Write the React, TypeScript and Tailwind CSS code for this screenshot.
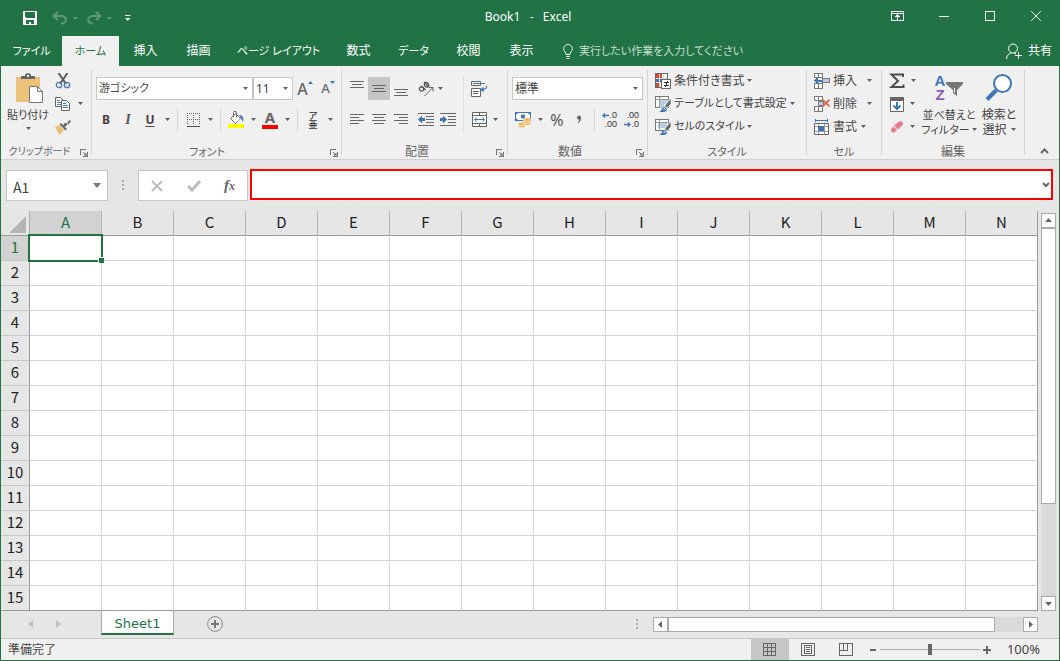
import React from 'react';

const columns = 'ABCDEFGHIJKLMN'.split('');
const rows = Array.from({ length: 15 }, (_, i) => i + 1);

const tabs = [
  { label: 'ファイル', cls: 'w-[61px] text-[11px] text-white' },
  { label: 'ホーム', cls: 'w-[57px] bg-[#f0f0f0] text-[11px] text-[#217346]' },
  { label: '挿入', cls: 'w-[53px] text-white' },
  { label: '描画', cls: 'w-[53px] text-white' },
  { label: 'ページ レイアウト', cls: 'w-[107px] text-[11px] text-white' },
  { label: '数式', cls: 'w-[53px] text-white' },
  { label: 'データ', cls: 'w-[57px] text-[11px] text-white' },
  { label: '校閲', cls: 'w-[53px] text-white' },
  { label: '表示', cls: 'w-[53px] text-white' },
];

type Kids = { children?: React.ReactNode };

function Svg({ w = 16, h = 16, crisp = false, children }: Kids & { w?: number; h?: number; crisp?: boolean }) {
  return (
    <svg
      width={w}
      height={h}
      viewBox={`0 0 ${w} ${h}`}
      fill="none"
      stroke="#666"
      shapeRendering={crisp ? 'crispEdges' : 'auto'}
      className="shrink-0"
      aria-hidden="true"
    >
      {children}
    </svg>
  );
}

function Arrow({ color = '#5f5f5f' }: { color?: string }) {
  return (
    <svg width="5" height="3" viewBox="0 0 5 3" className="shrink-0" aria-hidden="true">
      <path d="M0 0h5L2.500 3z" fill={color} />
    </svg>
  );
}

function Tool({ label, cls = '', children }: Kids & { label: string; cls?: string }) {
  return (
    <button type="button" aria-label={label} className={`flex h-[23px] w-[22px] items-center justify-center ${cls}`}>
      {children}
    </button>
  );
}

function Drop({ label, cls = 'w-3' }: { label: string; cls?: string }) {
  return (
    <button type="button" aria-label={label} className={`flex h-[23px] items-center justify-center ${cls}`}>
      <Arrow />
    </button>
  );
}

const Sep = () => <span className="mx-1 h-[22px] w-px bg-[#d5d5d5]" />;

function Combo({ label, value, cls, size = 'text-xs' }: { label: string; value: string; cls: string; size?: string }) {
  return (
    <span className={`relative flex ${cls}`}>
      <select
        aria-label={label}
        defaultValue={value}
        className={`h-[23px] w-full appearance-none border border-[#c6c6c6] bg-white pl-0.5 text-[#444] outline-none ${size}`}
      >
        <option>{value}</option>
      </select>
      <span className="pointer-events-none absolute inset-y-0 right-[5px] flex items-center">
        <Arrow />
      </span>
    </span>
  );
}

function Group({
  title,
  cls,
  launcher,
  size = 'text-xs',
  children,
}: Kids & { title: string; cls: string; launcher?: boolean; size?: string }) {
  return (
    <section aria-label={title} className={`flex shrink-0 pt-1 ${cls}`}>
      <div className="flex flex-1 flex-col">
        <div className="flex h-[74px]">{children}</div>
        <div className="flex h-[15px] items-center">
          <span className={`flex-1 text-center leading-[15px] whitespace-nowrap text-[#666] ${size}`}>{title}</span>
          {launcher && (
            <button type="button" aria-label={`${title}の設定`} className="mt-0.5 mr-[3px] -ml-2">
              <Svg w={8} h={8} crisp>
                <path d="M.5 6V.5H6M3 3l3 3M7.500 3v4.500H3" stroke="#777" />
                <path d="M4 4h3v3H4z" fill="#777" stroke="none" opacity=".6" />
              </Svg>
            </button>
          )}
        </div>
      </div>
      <span className="h-[85px] w-px bg-[#d5d5d5]" />
    </section>
  );
}

function MenuRow({
  label,
  arrowCls,
  icon,
  size = 'text-xs',
}: {
  label: string;
  arrowCls: string;
  icon: React.ReactNode;
  size?: string;
}) {
  return (
    <button type="button" className={`flex h-[23px] items-center whitespace-nowrap text-[#444] ${size}`}>
      {icon}
      <span className="ml-[3px]">{label}</span>
      <span className={arrowCls}>
        <Arrow />
      </span>
    </button>
  );
}

function Lines({ rows: list }: { rows: [number, number, number][] }) {
  return (
    <Svg crisp>
      {list.map(([x, y, w]) => (
        <path key={y} d={`M${x} ${y}.5h${w}`} />
      ))}
    </Svg>
  );
}

function Grip() {
  return (
    <svg width="2" height="10" viewBox="0 0 2 10" fill="#aaa" aria-hidden="true">
      <path d="M0 0h2v2H0zM0 4h2v2H0zM0 8h2v2H0z" />
    </svg>
  );
}

function TitleBar() {
  return (
    <header className="grid h-9 grid-cols-3 items-center">
      <div className="flex items-center pl-[22px]">
        <button type="button" aria-label="上書き保存">
          <Svg w={14} h={14} crisp>
            <path d="M0 0h14v14H0z" fill="#fff" stroke="none" />
            <path d="M2 1h10v5l-1 1H3L2 6zM3 9h8v4H8v-2H6v2H3z" fill="#217346" stroke="none" />
          </Svg>
        </button>
        <button type="button" aria-label="元に戻す" className="ml-[15px]">
          <Svg w={16} h={14}>
            <path d="M6 1L1.500 5 6 9M2 5h7c7 0 6 7.500 0 7.500" stroke="#5c9a78" strokeWidth="2" />
          </Svg>
        </button>
        <span className="ml-[5px]"><Arrow color="#5c9a78" /></span>
        <button type="button" aria-label="やり直し" className="ml-2">
          <Svg w={16} h={14}>
            <path d="M10 1l4.500 4L10 9M14 5H7C0 5 1 12.500 7 12.500" stroke="#5c9a78" strokeWidth="2" />
          </Svg>
        </button>
        <span className="ml-[5px]"><Arrow color="#5c9a78" /></span>
        <button type="button" aria-label="クイック アクセスのカスタマイズ" className="ml-[13px]">
          <Svg w={6} h={6}>
            <path d="M0 .5h5.500" stroke="#fff" />
            <path d="M0 3h5.500L2.750 6z" fill="#fff" stroke="none" />
          </Svg>
        </button>
      </div>
      <h1 className="pr-1 pb-0.5 text-center text-xs whitespace-pre text-white">Book1   -   Excel</h1>
      <div className="flex items-center justify-end pr-[18px] pb-1">
        <button type="button" aria-label="リボンの表示オプション">
          <Svg w={13} h={10} crisp>
            <path d="M.5.5h12v9H.5zM1 2.500h11M6.500 9V4M4.500 6l2-2 2 2" stroke="#fff" />
          </Svg>
        </button>
        <button type="button" aria-label="最小化" className="ml-[35px]">
          <Svg w={10} h={10} crisp><path d="M0 5.500h10" stroke="#fff" /></Svg>
        </button>
        <button type="button" aria-label="最大化" className="ml-9">
          <Svg w={10} h={10} crisp><path d="M.5.5h9v9h-9z" stroke="#fff" /></Svg>
        </button>
        <button type="button" aria-label="閉じる" className="ml-9">
          <Svg w={10} h={10}><path d="M0 0l10 10M10 0L0 10" stroke="#fff" /></Svg>
        </button>
      </div>
    </header>
  );
}

function TabBar() {
  return (
    <nav aria-label="リボン" className="flex h-[30px] items-center text-xs">
      {tabs.map((t) => (
        <button key={t.label} type="button" className={`h-full shrink-0 whitespace-nowrap ${t.cls}`}>
          {t.label}
        </button>
      ))}
      <button type="button" className="ml-[15px] flex items-center gap-1.5 text-[11px] whitespace-nowrap text-[#c8dfd1]">
        <Svg w={10} h={15}>
          <path d="M3 10.500V9C1.500 7.500.7 6.500.7 4.800a4.300 4.300 0 018.600 0C9.300 6.500 8.500 7.500 7 9v1.500zM3 12.500h4M3.500 14.500h3" stroke="#e4f0e8" />
        </Svg>
        実行したい作業を入力してください
      </button>
      <button type="button" className="mr-[7px] ml-auto flex items-center gap-1.5 text-white">
        <Svg w={16} h={17}>
          <circle cx="7" cy="5.500" r="4.500" stroke="#fff" />
          <path d="M.5 16c0-3 2-5.500 5-6M8 10l2 1M12.500 9v7M9 12.500h7" stroke="#fff" />
        </Svg>
        共有
      </button>
    </nav>
  );
}

function ClipboardGroup() {
  return (
    <Group title="クリップボード" cls="w-[91px]" size="pr-4 pl-1.5 text-[10px]" launcher>
      <button type="button" className="ml-[3px] flex w-12 flex-col items-center pt-[3px] text-xs text-[#444]">
        <Svg w={30} h={32}>
          <path d="M3 4h24v25H3z" fill="#ecc27a" stroke="none" />
          <path d="M8 6V3h4V2c0-2.500 6-2.500 6 0v1h4v3z" fill="#666" stroke="none" />
          <path d="M14 2h2v2h-2z" fill="#f0f0f0" stroke="none" />
          <path d="M16.500 13.500h8l5 5v11h-13z" fill="#fff" stroke="#777" />
          <path d="M24.500 13.500v5h5" stroke="#777" />
        </Svg>
        <span className="mt-0.5 text-[11px] leading-4 whitespace-nowrap">貼り付け</span>
        <span className="mt-1"><Arrow /></span>
      </button>
      <div className="-mt-px flex flex-col">
        <Tool label="切り取り">
          <Svg>
            <path d="M3.500 0L11 11M12.500 0L5 11" strokeWidth="2" stroke="#5a5a5a" />
            <circle cx="4" cy="12" r="2.700" stroke="#4a7ebb" strokeWidth="1.300" />
            <circle cx="12" cy="12" r="2.700" stroke="#4a7ebb" strokeWidth="1.300" />
          </Svg>
        </Tool>
        <div className="flex">
          <Tool label="コピー">
            <Svg>
              <path d="M.5 1.500h5l3 3v6h-8z" fill="#fff" />
              <path d="M2 4.500h3M2 6.500h4M2 8.500h4" stroke="#4a7ebb" />
              <path d="M6.500 4.500h5l3 3v7h-8z" fill="#fff" />
              <path d="M8 7.500h3M8 9.500h5M8 11.500h5" stroke="#4a7ebb" />
            </Svg>
          </Tool>
          <Drop label="コピーのオプション" />
        </div>
        <Tool label="書式のコピー">
          <Svg>
            <path d="M0 8l4-2 5 5-3 4-2 .5z" fill="#ecc27a" stroke="none" />
            <path d="M4.500 5.500L6 4l6 6-1.500 1.500z" fill="#666" stroke="none" />
            <path d="M8 6l2.500-2.500 2 2L10 8zM12 4l2.500-3 1.500 1-2.500 3.500z" fill="#666" stroke="none" />
          </Svg>
        </Tool>
      </div>
    </Group>
  );
}

function FontGroup() {
  return (
    <Group title="フォント" cls="w-[250px]" size="pr-4 text-[11px]" launcher>
      <div className="flex flex-col gap-2 pt-[7px] pl-1">
        <div className="flex">
          <Combo label="フォント名" value="游ゴシック" cls="w-[157px]" size="text-[11px]" />
          <Combo label="フォント サイズ" value="11" cls="w-10" />
          <Tool label="フォント サイズの拡大">
            <span className="ml-0.5 text-base font-medium text-[#666]">A</span>
            <span className="mb-3"><Svg w={5} h={3}><path d="M0 3h5L2.500 0z" fill="#3f77b5" stroke="none" /></Svg></span>
          </Tool>
          <Tool label="フォント サイズの縮小">
            <span className="ml-1 text-[13px] font-medium text-[#666]">A</span>
            <span className="mb-3"><Svg w={5} h={3}><path d="M0 0h5L2.500 3z" fill="#3f77b5" stroke="none" /></Svg></span>
          </Tool>
        </div>
        <div className="-ml-px flex items-center">
          <Tool label="太字" cls="text-xs font-bold text-[#444]">B</Tool>
          <Tool label="斜体" cls="font-['Liberation_Serif',serif] text-sm font-bold text-[#555] italic">I</Tool>
          <Tool label="下線" cls="text-xs font-bold text-[#444] underline underline-offset-2">U</Tool>
          <Drop label="下線の種類" />
          <Sep />
          <Tool label="罫線">
            <Svg w={13} h={14} crisp>
              <path d="M.5 0v12M6.500 0v12M12.500 0v12M0 .5h13M0 6.500h13" strokeDasharray="1 1" stroke="#666" />
              <path d="M0 13.500h13" stroke="#555" />
            </Svg>
          </Tool>
          <Drop label="罫線の種類" />
          <Sep />
          <Tool label="塗りつぶしの色">
            <Svg w={16} h={17}>
              <path d="M7.500 2.500l5 5-5 5-5-5zM5.500 6V1.500c0-1.500 3-1.500 3 0V6" fill="none" />
              <path d="M4 8h8l-4.500 4z" fill="#fff" stroke="none" />
              <path d="M11 4c4 0 5 3 4 7-1-1.500-1.500-3-2-3.500z" fill="#3f77b5" stroke="none" />
              <path d="M0 13h16v4H0z" fill="#ff0" stroke="none" />
            </Svg>
          </Tool>
          <Drop label="塗りつぶしの色の選択" />
          <Tool label="フォントの色" cls="flex-col">
            <span className="text-[15px] leading-3 font-bold text-[#666]">A</span>
            <span className="mt-0.5 h-1 w-4 bg-[#f00]" />
          </Tool>
          <Drop label="フォントの色の選択" />
          <Sep />
          <Tool label="ふりがなの表示" cls="flex-col text-[9px] leading-[9px] font-medium text-[#333]">
            <span>ア</span>
            <span>亜</span>
          </Tool>
          <Drop label="ふりがなの設定" />
        </div>
      </div>
    </Group>
  );
}

function IndentIcon({ d }: { d: string }) {
  return (
    <Svg crisp>
      <path d="M0 1.500h16M8 4.500h8M8 7.500h8M8 10.500h8M0 13.500h16" />
      <path d={d} fill="#3f77b5" stroke="none" />
    </Svg>
  );
}

function AlignGroup() {
  return (
    <Group title="配置" cls="w-[166px]" size="pr-3 text-xs" launcher>
      <div className="flex w-[117px] flex-col gap-2 pt-[7px] pl-1">
        <div className="flex">
          <Tool label="上揃え"><Lines rows={[[1, 0, 14], [3, 3, 10], [1, 6, 14]]} /></Tool>
          <Tool label="上下中央揃え" cls="bg-[#c5c5c5]"><Lines rows={[[1, 4, 14], [3, 7, 10], [1, 10, 14]]} /></Tool>
          <Tool label="下揃え"><Lines rows={[[1, 8, 14], [3, 11, 10], [1, 14, 14]]} /></Tool>
          <button type="button" aria-label="方向" className="ml-1.5 flex items-center gap-1">
            <Svg>
              <path d="M6.500 15L15 6.500M15 10.500V6.500H11" />
              <g stroke="#555" strokeWidth="1.300">
                <ellipse cx="3.500" cy="8" rx="2" ry="2.300" transform="rotate(-45 3.500 8)" />
                <path d="M3.500 5l4 4M6 1l5 5" />
                <ellipse cx="8.500" cy="3.800" rx="2" ry="2.300" transform="rotate(-45 8.500 3.800)" />
              </g>
            </Svg>
            <Arrow />
          </button>
        </div>
        <div className="flex">
          <Tool label="左揃え"><Lines rows={[[1, 2, 14], [1, 5, 9], [1, 8, 14], [1, 11, 9]]} /></Tool>
          <Tool label="中央揃え"><Lines rows={[[1, 2, 14], [3, 5, 10], [1, 8, 14], [3, 11, 10]]} /></Tool>
          <Tool label="右揃え"><Lines rows={[[1, 2, 14], [6, 5, 9], [1, 8, 14], [6, 11, 9]]} /></Tool>
          <Tool label="インデントを減らす" cls="ml-[3px]"><IndentIcon d="M0 7.500L4 4v2h3v3H4v2z" /></Tool>
          <Tool label="インデントを増やす"><IndentIcon d="M7 7.500L3 4v2H0v3h3v2z" /></Tool>
        </div>
      </div>
      <span className="mt-1.5 mr-1 ml-1 h-[55px] w-px bg-[#dedede]" />
      <div className="flex flex-col gap-2 pt-[7px]">
        <Tool label="折り返して全体を表示する">
          <Svg>
            <path d="M.5.5h9v4h-9zM.5 7.500h9v8h-9z" fill="#fff" />
            <path d="M2 10.500h6M2 12.500h5" />
            <path d="M2 2.500h12" stroke="#3f77b5" />
            <path d="M15.500 5c0 3-1 3.500-4 3.500" stroke="#3f77b5" strokeWidth="1.300" />
            <path d="M9 8.500L12.500 5.500v6z" fill="#3f77b5" stroke="none" />
          </Svg>
        </Tool>
        <div className="flex">
          <Tool label="セルを結合して中央揃え">
            <Svg w={15} h={15}>
              <path d="M.5.5h14v14H.5zM.5 3.500h14M.5 11.500h14M7.500.5v3M7.500 11.500v3" fill="#fff" />
              <path d="M3 7.500h9M4.500 5.500l-2 2 2 2M10.500 5.500l2 2-2 2" stroke="#3f77b5" />
            </Svg>
          </Tool>
          <Drop label="結合のオプション" cls="w-[10px]" />
        </div>
      </div>
    </Group>
  );
}

function Decimal({ top, bottom, d, onTop }: { top: string; bottom: string; d: string; onTop: boolean }) {
  const arrow = <Svg w={7} h={5}><path d={d} stroke="#3f77b5" strokeWidth="1.300" /></Svg>;
  return (
    <>
      <span className="flex items-center">{onTop && arrow}{top}</span>
      <span className="flex items-center">{!onTop && arrow}{bottom}</span>
    </>
  );
}

function NumberGroup() {
  return (
    <Group title="数値" cls="w-[140px]" size="pr-3 text-xs" launcher>
      <div className="flex flex-col gap-2 pt-[7px] pl-1">
        <Combo label="表示形式" value="標準" cls="w-[131px]" />
        <div className="flex items-center">
          <Tool label="通貨表示形式">
            <Svg>
              <path d="M0 0h16v9H0z" fill="#3f77b5" stroke="none" />
              <path d="M1 3l2-2h10l2 2v3l-2 2H3L1 6z" fill="#fff" stroke="none" />
              <circle cx="8" cy="4.500" r="2.200" fill="#3f77b5" stroke="none" />
              <g fill="#ecb35c" stroke="#f7ead2" strokeWidth=".8">
                <ellipse cx="7" cy="14" rx="3.700" ry="1.700" /><ellipse cx="7" cy="12" rx="3.700" ry="1.700" />
                <ellipse cx="12" cy="11.500" rx="3.700" ry="1.700" /><ellipse cx="12" cy="9.500" rx="3.700" ry="1.700" /><ellipse cx="12" cy="7.500" rx="3.700" ry="1.700" />
              </g>
            </Svg>
          </Tool>
          <Drop label="通貨の種類" />
          <Tool label="パーセント スタイル" cls="text-base text-[#555]">%</Tool>
          <Tool label="桁区切りスタイル">
            <Svg w={6} h={9}><path d="M1 2.500a2 2 0 114 0C5 5 4 7.500 1.500 8.500 2.500 7 3 6 3 4.500 2 4.500 1 4 1 2.500z" fill="#666" stroke="none" /></Svg>
          </Tool>
          <Sep />
          <Tool label="小数点以下の表示桁数を増やす" cls="flex-col items-end pr-1 font-['Liberation_Sans',sans-serif] text-[9px] leading-[9px] text-[#333]">
            <Decimal top=".0" bottom=".00" d="M7 2.500H1M3 .5l-2 2 2 2" onTop />
          </Tool>
          <Tool label="小数点以下の表示桁数を減らす" cls="flex-col items-end pr-1 font-['Liberation_Sans',sans-serif] text-[9px] leading-[9px] text-[#333]">
            <Decimal top=".00" bottom=".0" d="M0 2.500h6M4 .5l2 2-2 2" onTop={false} />
          </Tool>
        </div>
      </div>
    </Group>
  );
}

function TableBrush({ shade }: { shade: string }) {
  return (
    <Svg>
      <g shapeRendering="crispEdges">
        <path d="M.5.5h13v11H.5z" fill="#fff" stroke="#777" />
        <path d={shade} fill="#b8cce4" stroke="none" />
        <path d="M0 3.500h14M4.500 1v11" stroke="#999" />
      </g>
      <path d="M16 2v6l-4 4-2.500-2z" fill="#666" stroke="#f0f0f0" strokeWidth=".8" />
      <path d="M4 16c3-1 2-4 5-5l3 2c0 3-4 3.500-8 3z" fill="#3f77b5" stroke="none" />
      <path d="M8 13.500l1-1 1.500 1" stroke="#fff" />
    </Svg>
  );
}

function StyleGroup() {
  return (
    <Group title="スタイル" cls="w-[159px]" size="text-[11px]">
      <div className="-mt-px flex flex-col pl-[7px]">
        <MenuRow
          label="条件付き書式"
          arrowCls="ml-0.5"
          icon={
            <Svg crisp>
              <path d="M.5.5h12v14H.5z" fill="#fff" />
              <path d="M1 1h6v4H1z" fill="#d04a2b" stroke="none" />
              <path d="M1 6h8v3H1z" fill="#3f77b5" stroke="none" />
              <path d="M1 10h4v4H1z" fill="#d04a2b" stroke="none" />
              <path d="M4.500 1v13M8.500 1v5M1 5.500h11M1 9.500h5" stroke="#ddd" />
              <path d="M6.500 6.500h9v9h-9z" fill="#fff" />
              <path d="M9 9.500h5M9 12.500h5M12.500 8l-2 6" stroke="#333" />
            </Svg>
          }
        />
        <MenuRow label="テーブルとして書式設定" size="text-[11px]" arrowCls="ml-[3px]" icon={<TableBrush shade="M5 4h9v4H5zM5 8h4v4H5z" />} />
        <MenuRow label="セルのスタイル" size="text-[11px]" arrowCls="ml-0.5" icon={<TableBrush shade="M3 3h9v6H3z" />} />
      </div>
    </Group>
  );
}

function CellGroup() {
  return (
    <Group title="セル" cls="w-[75px]" size="text-[11px]">
      <div className="-mt-px flex flex-col pl-[7px]">
        <MenuRow
          label="挿入"
          arrowCls="ml-2.5"
          icon={
            <Svg crisp>
              <path d="M.5.5h4v4h-4zM4.500.5h4v4h-4zM.5 10.500h4v5h-4zM4.500 10.500h4v5h-4z" fill="#fff" stroke="#777" />
              <path d="M8.500 5.500h7v4h-7z" fill="#b8cce4" stroke="#777" />
              <path d="M0 7.500L4 4v3h4v2H4v3z" fill="#3f77b5" stroke="none" />
            </Svg>
          }
        />
        <MenuRow
          label="削除"
          arrowCls="ml-2.5"
          icon={
            <Svg>
              <path d="M.5.5h4v4h-4zM4.500.5h4v4h-4zM.5 10.500h4v5h-4zM4.500 10.500h4v5h-4z" fill="#fff" stroke="#777" />
              <path d="M4.500 5.500h5v4h-5z" fill="#b8cce4" stroke="#777" />
              <path d="M8.500 3.500l7 7M15.500 3.500l-7 7" stroke="#dd5a38" strokeWidth="1.600" />
            </Svg>
          }
        />
        <MenuRow
          label="書式"
          arrowCls="ml-1"
          icon={
            <Svg>
              <path d="M1.500 0v3M13.500 0v3M2 1.500h11" stroke="#3f77b5" />
              <path d="M.5 4.500h14v11H.5z" fill="#fff" />
              <path d="M1 7.500h13M1 12.500h13M4.500 5v10M10.500 5v10" stroke="#999" />
              <path d="M4 7h6v5H4z" fill="#3f77b5" stroke="none" />
            </Svg>
          }
        />
      </div>
    </Group>
  );
}

function EditGroup() {
  return (
    <Group title="編集" cls="w-[143px]">
      <div className="-mt-px flex w-[38px] flex-col pl-1">
        <div className="flex">
          <Tool label="オート SUM">
            <Svg><path d="M14 4V1.500H2.500L9 8l-6.500 6H14.500V11.500" stroke="#4d4d4d" strokeWidth="2" /></Svg>
          </Tool>
          <Drop label="集計方法" cls="w-[10px]" />
        </div>
        <div className="flex">
          <Tool label="フィル">
            <Svg w={14} h={16}>
              <path d="M.5 1.500h13v14H.5z" fill="#fff" />
              <path d="M0 1h14v4H0z" fill="#666" stroke="none" />
              <path d="M7 6v7M3.500 9.500L7 13l3.500-3.500" stroke="#3f77b5" strokeWidth="2" />
            </Svg>
          </Tool>
          <Drop label="フィルの方向" cls="w-2" />
        </div>
        <div className="flex">
          <Tool label="クリア">
            <Svg>
              <path d="M10 2.500h3l1 1v2l-5 5-4-4z" fill="#e8788c" stroke="none" />
              <path d="M4.500 7.500l3.500 3.500-2.500 2.500h-2L2 12v-2z" fill="#e8788c" stroke="none" />
            </Svg>
          </Tool>
          <Drop label="クリアの種類" cls="w-2" />
        </div>
      </div>
      <button type="button" className="flex w-14 flex-col items-center pt-1 pl-0.5 text-[11px] text-[#444]">
        <span className="flex items-center">
          <span className="flex flex-col font-['Liberation_Sans',sans-serif] text-[15px] leading-[14px] font-bold">
            <span className="text-[#3f77b5]">A</span>
            <span className="text-[#8e5bb5]">Z</span>
          </span>
          <Svg w={18} h={18}>
            <path d="M1 3h17v2L12 11v6l-4-3v-3L1 5z" fill="#777" stroke="none" />
            <path d="M9.500 9v4.500" stroke="#fff" />
          </Svg>
        </span>
        <span className="mt-[5px] leading-[15px] whitespace-nowrap">並べ替えと</span>
        <span className="flex items-center gap-0.5 leading-[15px] whitespace-nowrap">フィルター <Arrow /></span>
      </button>
      <button type="button" className="flex w-[45px] flex-col items-center pt-1 pl-px text-xs text-[#444]">
        <Svg w={28} h={28}>
          <circle cx="17.500" cy="9.500" r="8.500" fill="#fff" stroke="#3f77b5" strokeWidth="2" />
          <path d="M11 16.500L2 25.500" stroke="#3f77b5" strokeWidth="4" />
        </Svg>
        <span className="mt-[5px] leading-[15px] whitespace-nowrap">検索と</span>
        <span className="flex items-center gap-1 leading-[15px] whitespace-nowrap">選択 <Arrow /></span>
      </button>
    </Group>
  );
}

function Ribbon() {
  return (
    <div className="flex h-[94px] border-b border-[#d0d0d0] bg-[#f0f0f0]">
      <ClipboardGroup />
      <FontGroup />
      <AlignGroup />
      <NumberGroup />
      <StyleGroup />
      <CellGroup />
      <EditGroup />
      <button type="button" aria-label="リボンを折りたたむ" className="mt-auto mr-[10px] mb-[5px] ml-auto">
        <Svg w={9} h={6}><path d="M1 5l3.500-3.500L8 5" strokeWidth="2" /></Svg>
      </button>
    </div>
  );
}

function FormulaBar() {
  return (
    <div className="flex h-[51px] items-start pt-[9px] pr-1.5 pl-[5px]">
      <div className="mt-px flex h-[31px] w-[102px] items-center border border-[#c6c6c6] bg-white pr-1.5">
        <input aria-label="名前ボックス" defaultValue="A1" className="w-full min-w-0 bg-transparent pt-0.5 pl-1.5 font-['Noto_Sans_CJK_JP',sans-serif] text-sm text-[#444] outline-none" />
        <Svg w={8} h={5}><path d="M0 0h8L4 5z" fill="#777" stroke="none" /></Svg>
      </div>
      <span className="mx-3.5 mt-[11px]"><Grip /></span>
      <div className="mt-px flex h-[31px] w-[110px] items-center justify-between border border-[#c6c6c6] bg-white px-3">
        <button type="button" aria-label="キャンセル">
          <Svg w={12} h={12}><path d="M1 1l10 10M11 1L1 11" stroke="#bdbdbd" strokeWidth="2" /></Svg>
        </button>
        <button type="button" aria-label="入力">
          <Svg w={14} h={12}><path d="M1 6l4 4 8-9" stroke="#bdbdbd" strokeWidth="3" /></Svg>
        </button>
        <button type="button" aria-label="関数の挿入" className="font-['Liberation_Serif',serif] text-[15px] leading-4 font-bold text-[#666] italic">
          f<span className="text-xs">x</span>
        </button>
      </div>
      <div className="ml-0.5 flex h-[31px] flex-1 items-center border-2 border-[#f00] bg-white">
        <input aria-label="数式バー" className="h-full min-w-0 flex-1 bg-transparent px-2 text-sm outline-none" />
        <button type="button" aria-label="数式バーの展開" className="mr-px">
          <Svg w={8} h={6}><path d="M1 1l3 3 3-3" strokeWidth="2" /></Svg>
        </button>
      </div>
    </div>
  );
}

function Grid() {
  return (
    <table className="w-full table-fixed border-separate border-spacing-0 font-['Noto_Sans_CJK_JP',sans-serif] text-[15px] leading-[22px] text-[#222]">
      <colgroup>
        <col className="w-[29px]" />
        {columns.map((c) => <col key={c} />)}
      </colgroup>
      <thead>
        <tr>
          <th aria-label="すべて選択" className="h-[25px] border-r border-b border-r-[#ababab] border-b-[#999] p-0">
            <svg width="17" height="17" viewBox="0 0 17 17" className="mt-0.5 ml-2" aria-hidden="true">
              <path d="M17 0v17H0z" fill="#b4b4b4" />
            </svg>
          </th>
          {columns.map((c) => (
            <th
              key={c}
              scope="col"
              className={`h-[25px] border-r border-b border-r-[#b5b5b5] border-b-[#999] p-0 pb-0.5 font-normal last:border-r-[#999] ${c === 'A' ? 'bg-[#d2d2d2] text-[#217346]' : ''}`}
            >
              {c}
            </th>
          ))}
        </tr>
      </thead>
      <tbody>
        {rows.map((r) => (
          <tr key={r} className="group">
            <th
              scope="row"
              className={`h-[25px] border-r border-b border-r-[#999] border-b-[#c6c6c6] p-0 pb-0.5 font-normal group-last:border-b-[#999] ${r === 1 ? 'bg-[#d2d2d2] text-[#217346]' : ''}`}
            >
              {r}
            </th>
            {columns.map((c) => (
              <td
                key={c}
                className="relative h-[25px] border-r border-b border-[#d4d4d4] bg-white p-0 group-last:border-b-[#999] last:border-r-[#999]"
              >
                {r === 1 && c === 'A' && (
                  <span className="absolute -inset-0.5 z-10 border-2 border-[#217346]">
                    <span className="absolute -right-[3px] -bottom-[3px] size-1.5 border-t border-l border-white bg-[#217346]" />
                  </span>
                )}
              </td>
            ))}
          </tr>
        ))}
      </tbody>
    </table>
  );
}

function ScrollButton({ label, d, cls }: { label: string; d: string; cls: string }) {
  return (
    <button type="button" aria-label={label} className={`flex size-[15px] shrink-0 items-center justify-center border border-[#ababab] bg-white ${cls}`}>
      <svg width="7" height="7" viewBox="0 0 7 7" aria-hidden="true"><path d={d} fill="#666" /></svg>
    </button>
  );
}

function SheetBar() {
  return (
    <div className="flex h-[27px] items-start pr-[21px]">
      <div className="flex w-[100px] items-center gap-[23px] pt-[9px] pl-[27px]">
        <button type="button" aria-label="前のシート"><Svg w={5} h={8}><path d="M5 0v8L0 4z" fill="#c0c0c0" stroke="none" /></Svg></button>
        <button type="button" aria-label="次のシート"><Svg w={5} h={8}><path d="M0 0v8l5-4z" fill="#c0c0c0" stroke="none" /></Svg></button>
      </div>
      <button type="button" className="h-6 w-[73px] border-x border-b-2 border-x-[#ababab] border-b-[#217346] bg-white pt-[3px] font-['DejaVu_Sans',sans-serif] text-[13px] leading-[19px] text-[#217346]">
        Sheet1
      </button>
      <button type="button" aria-label="新しいシート" className="mt-[5px] ml-[33px]">
        <Svg w={16} h={16}>
          <circle cx="8" cy="8" r="7.400" stroke="#888" />
          <path d="M8 4v8M4 8h8" stroke="#777" strokeWidth="2" />
        </Svg>
      </button>
      <span className="mt-2 mr-[15px] ml-auto"><Grip /></span>
      <div className="mt-1.5 flex w-[385px] bg-[#dadada]">
        <ScrollButton label="左へスクロール" d="M5 0v7L1 3.500z" cls="" />
        <div className="h-[15px] w-[327px] border border-[#ababab] bg-white" />
        <ScrollButton label="右へスクロール" d="M2 0v7l4-3.500z" cls="ml-auto" />
      </div>
    </div>
  );
}

function StatusBar() {
  return (
    <footer className="flex h-[22px] items-center border-t border-[#c6c6c6] bg-[#f0f0f0] text-xs text-[#444]">
      <span className="pl-[7px]">準備完了</span>
      <div className="ml-auto flex h-full items-center">
        <button type="button" aria-label="標準" className="flex h-full w-[38px] items-center justify-center bg-[#c6c6c6]">
          <Svg w={13} h={13} crisp><path d="M.5.5h12v12H.5zM.5 4.500h12M.5 8.500h12M4.500.5v12M8.500.5v12" /></Svg>
        </button>
        <button type="button" aria-label="ページ レイアウト" className="flex h-full w-[38px] items-center justify-center">
          <Svg w={14} h={13} crisp><path d="M.5.5h13v12H.5zM3.500 2.500h7v8h-7zM5 4.500h4M5 6.500h4M5 8.500h4" /></Svg>
        </button>
        <button type="button" aria-label="改ページ プレビュー" className="flex h-full w-[38px] items-center justify-center">
          <Svg w={14} h={13} crisp><path d="M.5.5h13v12H.5zM4.500.5v7M8.500.5v7M.5 7.500h8" /></Svg>
        </button>
        <button type="button" aria-label="縮小" className="ml-1">
          <Svg w={8} h={8} crisp><path d="M1 4h6" strokeWidth="2" /></Svg>
        </button>
        <input
          type="range"
          aria-label="ズーム"
          min="0"
          max="200"
          defaultValue="100"
          className="mx-[3px] h-3 w-[100px] appearance-none bg-[linear-gradient(#aaa,#aaa)] bg-[length:100%_1px] bg-center bg-no-repeat [&::-webkit-slider-thumb]:h-[11px] [&::-webkit-slider-thumb]:w-1 [&::-webkit-slider-thumb]:appearance-none [&::-webkit-slider-thumb]:bg-[#666]"
        />
        <button type="button" aria-label="拡大">
          <Svg w={8} h={8} crisp><path d="M0 4h8M4 0v8" strokeWidth="2" /></Svg>
        </button>
        <span className="mr-[19px] ml-4 text-[13px]">100%</span>
      </div>
    </footer>
  );
}

export default function App() {
  return (
    <div className="border-x border-b border-[#217346] bg-[#e6e6e6] font-['Noto_Sans','Noto_Sans_CJK_JP',sans-serif] [font-feature-settings:'palt']">
      <div className="bg-[#217346]">
        <TitleBar />
        <TabBar />
      </div>
      <Ribbon />
      <FormulaBar />
      <main className="flex">
        <div className="min-w-0 flex-1"><Grid /></div>
        <div className="mt-0.5 mr-[3px] ml-[3px] flex w-[15px] flex-col bg-[#dadada]">
          <ScrollButton label="上へスクロール" d="M0 5h7L3.500 1z" cls="" />
          <div className="h-[276px] border border-[#ababab] bg-white" />
          <ScrollButton label="下へスクロール" d="M0 2h7L3.500 6z" cls="mt-auto" />
        </div>
      </main>
      <SheetBar />
      <StatusBar />
    </div>
  );
}
